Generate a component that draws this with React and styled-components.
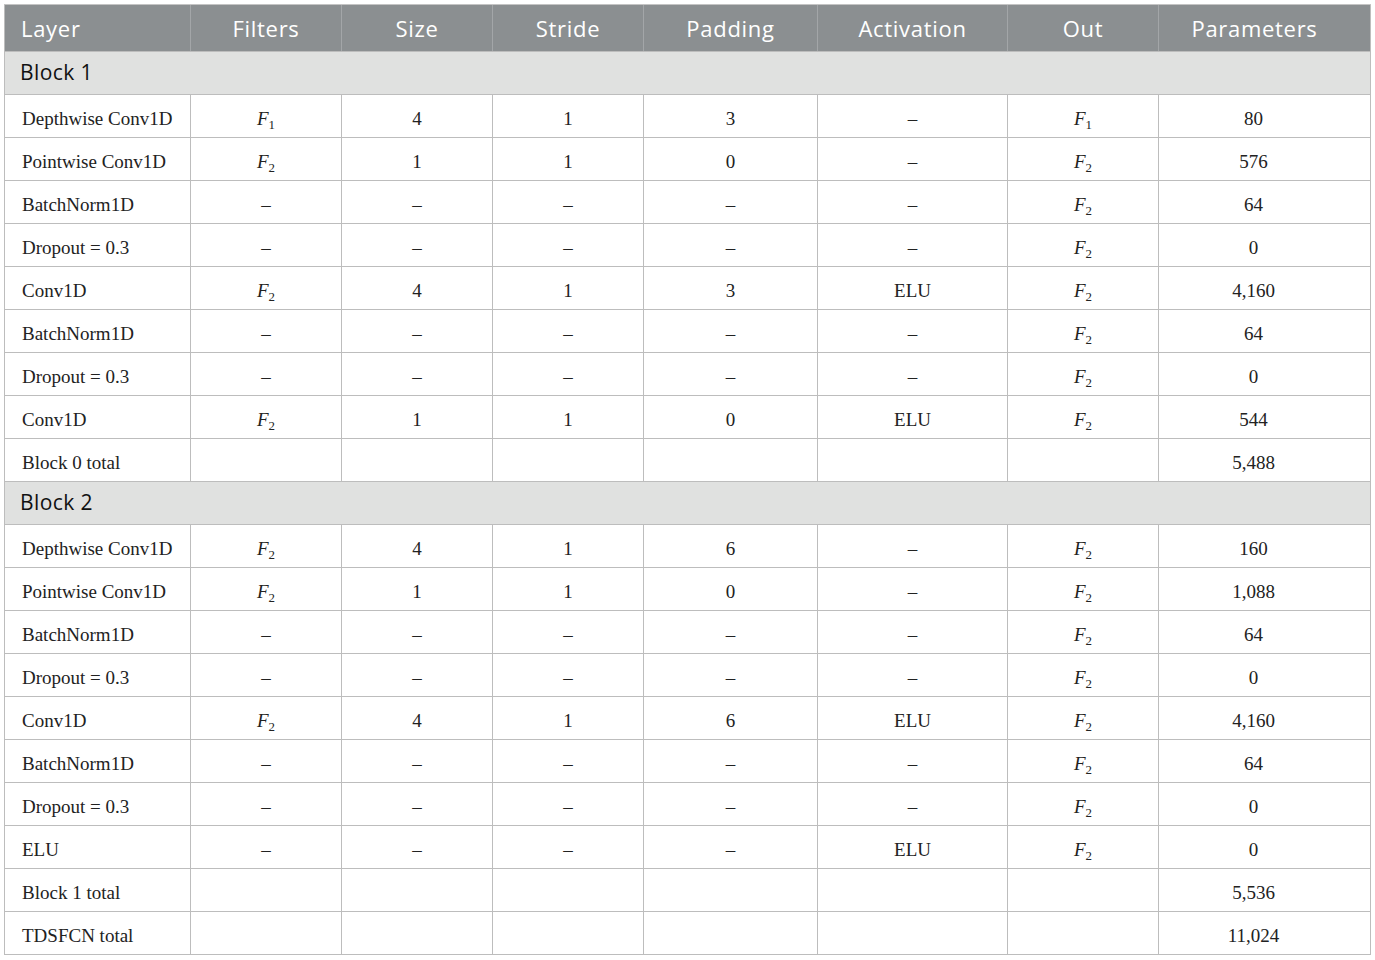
import React from "react";
import styled, { createGlobalStyle } from "styled-components";

const Global = createGlobalStyle`
  body { margin: 0; background: #fff; }
`;

const Page = styled.div`
  padding: 4px 0 0 4px;
`;

const Table = styled.table`
  border-collapse: collapse;
  table-layout: fixed;
  width: 1366px;
  border: 1px solid #bdbdbd;
`;

const HeadCell = styled.th`
  background: #8b8f91;
  color: #fff;
  font-family: "Open Sans", "Noto Sans", sans-serif;
  font-weight: 400;
  font-size: 22px;
  letter-spacing: 0.7px;
  height: 46px;
  padding: 0 ${(p) => (p.$last ? "20px" : "0")} 0 ${(p) => (p.$left ? "16px" : "0")};
  text-align: ${(p) => (p.$left ? "left" : "center")};
  border-left: 1px solid #a3a6a8;
  border-top: 1px solid #c4c4c4;
  border-bottom: 1px solid #bdbdbd;
  &:first-child { border-left: 1px solid #bdbdbd; }
`;

const BlockCell = styled.td`
  background: #e0e1e0;
  color: #111;
  font-family: "Open Sans", "Noto Sans", sans-serif;
  font-size: 21px;
  letter-spacing: 0.4px;
  height: 40px;
  padding: 0 0 2px 15px;
  border: 1px solid #bdbdbd;
`;

const Cell = styled.td`
  font-family: "Liberation Serif", "DejaVu Serif", serif;
  font-size: 19px;
  color: #222;
  height: 37px;
  padding: 5px ${(p) => (p.$last ? "22px" : "0")} 0 ${(p) => (p.$left ? "17px" : "0")};
  text-align: ${(p) => (p.$left ? "left" : "center")};
  border: 1px solid #bdbdbd;
`;

const Sym = styled.span`
  font-style: italic;
  sub {
    font-style: normal;
    font-size: 0.68em;
    vertical-align: -0.28em;
    line-height: 0;
    margin-left: 0;
  }
`;

const widths = [186, 151, 151, 151, 174, 190, 151, 212];
const headers = ["Layer", "Filters", "Size", "Stride", "Padding", "Activation", "Out", "Parameters"];

const F = ({ n }) => (
  <Sym>
    F<sub>{n}</sub>
  </Sym>
);

const D = "–";

const block1 = [
  ["Depthwise Conv1D", 1, "4", "1", "3", D, 1, "80"],
  ["Pointwise Conv1D", 2, "1", "1", "0", D, 2, "576"],
  ["BatchNorm1D", D, D, D, D, D, 2, "64"],
  ["Dropout = 0.3", D, D, D, D, D, 2, "0"],
  ["Conv1D", 2, "4", "1", "3", "ELU", 2, "4,160"],
  ["BatchNorm1D", D, D, D, D, D, 2, "64"],
  ["Dropout = 0.3", D, D, D, D, D, 2, "0"],
  ["Conv1D", 2, "1", "1", "0", "ELU", 2, "544"],
  ["Block 0 total", "", "", "", "", "", "", "5,488"],
];

const block2 = [
  ["Depthwise Conv1D", 2, "4", "1", "6", D, 2, "160"],
  ["Pointwise Conv1D", 2, "1", "1", "0", D, 2, "1,088"],
  ["BatchNorm1D", D, D, D, D, D, 2, "64"],
  ["Dropout = 0.3", D, D, D, D, D, 2, "0"],
  ["Conv1D", 2, "4", "1", "6", "ELU", 2, "4,160"],
  ["BatchNorm1D", D, D, D, D, D, 2, "64"],
  ["Dropout = 0.3", D, D, D, D, D, 2, "0"],
  ["ELU", D, D, D, D, "ELU", 2, "0"],
  ["Block 1 total", "", "", "", "", "", "", "5,536"],
  ["TDSFCN total", "", "", "", "", "", "", "11,024"],
];

const renderVal = (v) => (typeof v === "number" ? <F n={v} /> : v);

const Rows = ({ rows }) =>
  rows.map((r, i) => (
    <tr key={i}>
      {r.map((v, j) => (
        <Cell key={j} $left={j === 0} $last={j === r.length - 1}>
          {renderVal(v)}
        </Cell>
      ))}
    </tr>
  ));

export default function App() {
  return (
    <Page>
      <Global />
      <Table>
        <colgroup>
          {widths.map((w, i) => (
            <col key={i} style={{ width: w }} />
          ))}
        </colgroup>
        <thead>
          <tr>
            {headers.map((h, i) => (
              <HeadCell key={h} $left={i === 0} $last={i === headers.length - 1}>
                {h}
              </HeadCell>
            ))}
          </tr>
        </thead>
        <tbody>
          <tr>
            <BlockCell colSpan={8}>Block 1</BlockCell>
          </tr>
          <Rows rows={block1} />
          <tr>
            <BlockCell colSpan={8}>Block 2</BlockCell>
          </tr>
          <Rows rows={block2} />
        </tbody>
      </Table>
    </Page>
  );
}
